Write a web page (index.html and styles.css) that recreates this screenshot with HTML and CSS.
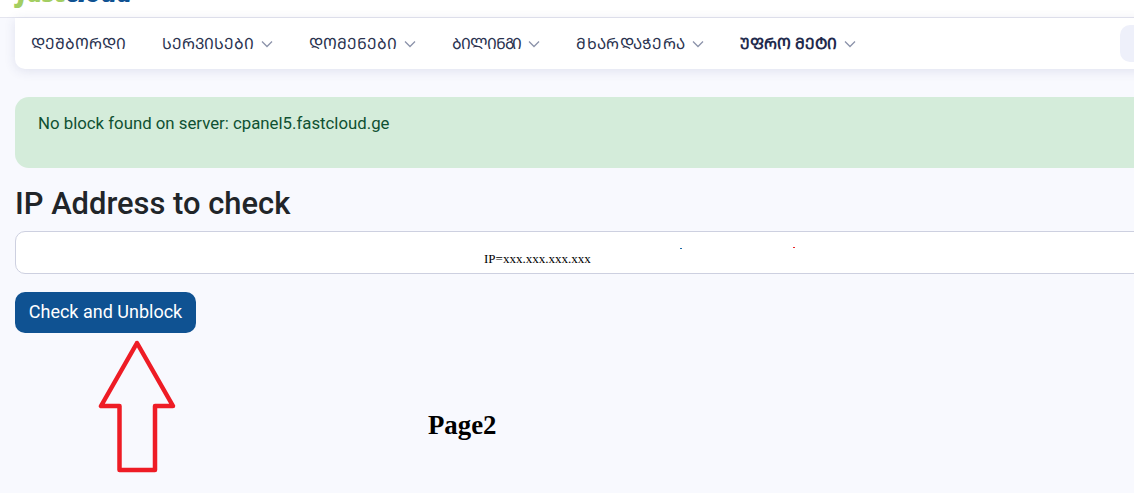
FILE: index.html
```html
<!DOCTYPE html>
<html lang="ka">
<head>
<meta charset="utf-8">
<title>Check and Unblock</title>
<link rel="stylesheet" href="styles.css">
</head>
<body>
<div class="page">
  <header class="topbar">
    <div class="logo"><span class="logo-fast">fast</span><span class="logo-cloud">cloud</span></div>
  </header>
  <main class="content">
    <nav class="nav">
      <a class="nav-item">ᲓᲔᲨᲑᲝᲠᲓᲘ</a>
      <a class="nav-item">ᲡᲔᲠᲕᲘᲡᲔᲑᲘ<svg class="chev" viewBox="0 0 12 8"><path d="M1 1.5l5 5 5-5"/></svg></a>
      <a class="nav-item">ᲓᲝᲛᲔᲜᲔᲑᲘ<svg class="chev" viewBox="0 0 12 8"><path d="M1 1.5l5 5 5-5"/></svg></a>
      <a class="nav-item nav-tight">ᲑᲘᲚᲘᲜᲒᲘ<svg class="chev" viewBox="0 0 12 8"><path d="M1 1.5l5 5 5-5"/></svg></a>
      <a class="nav-item nav-wide">ᲛᲮᲐᲠᲓᲐᲭᲔᲠᲐ<svg class="chev" viewBox="0 0 12 8"><path d="M1 1.5l5 5 5-5"/></svg></a>
      <a class="nav-item nav-more">ᲣᲤᲠᲝ ᲛᲔᲢᲘ<svg class="chev" viewBox="0 0 12 8"><path d="M1 1.5l5 5 5-5"/></svg></a>
      <div class="nav-search"></div>
    </nav>
    <div class="alert">No block found on server: cpanel5.fastcloud.ge</div>
    <h1 class="title">IP Address to check</h1>
    <div class="field"></div>
    <button class="btn" type="button">Check and Unblock</button>
  </main>
  <div class="ip-note">IP=xxx.xxx.xxx.xxx</div>
  <span class="speck speck-blue"></span>
  <span class="speck speck-red"></span>
  <svg class="arrow" viewBox="0 0 80 136" width="80" height="136">
    <path d="M39 4L3 67H21.5V131H57V67H75Z"/>
  </svg>
  <div class="page-label">Page2</div>
</div>
</body>
</html>
```
FILE: styles.css
```css
* { box-sizing: border-box; }
html, body { margin: 0; height: 100%; overflow: hidden; }
body { background: #f8f9fe; font-family: Roboto, "DejaVu Sans", sans-serif; }
.page { position: relative; width: 1134px; height: 493px; overflow: hidden; }
.topbar {
  height: 18px;
  background: #fff;
  border-bottom: 1px solid #e4e5ef;
  padding-left: 17px;
  overflow: hidden;
  display: flex;
  align-items: flex-end;
}
.logo {
  font: italic 800 27px/30px "Open Sans", sans-serif;
  margin-bottom: 10px;
  letter-spacing: -1.2px;
  white-space: nowrap;
}
.logo-fast { color: #a3ce62; }
.logo-cloud { color: #0f5292; }
.content { width: 1315px; padding-left: 15px; }
.nav {
  height: 51px;
  background: #fff;
  border-radius: 0 0 10px 10px;
  box-shadow: 0 2px 12px rgba(50, 60, 120, 0.12);
  display: flex;
  align-items: center;
  padding-left: 16px;
}
.nav-item {
  display: flex;
  align-items: center;
  font-family: "Noto Sans", "DejaVu Sans", sans-serif;
  font-size: 15.4px;
  color: #2a3350;
  margin-right: 36px;
  white-space: nowrap;
}
.nav-tight { letter-spacing: -1.1px; }
.nav-wide { letter-spacing: 0.3px; }
.nav-more { font-weight: 700; color: #1f2a4d; }
.chev { width: 12px; height: 8px; margin-left: 7px; fill: none; stroke: #8c93aa; stroke-width: 1.3; }
.nav-search {
  width: 195px;
  height: 37px;
  margin-left: auto;
  background: #eef0fa;
  border-radius: 10px;
}
.alert {
  height: 71px;
  margin-top: 28px;
  padding: 16px 23px;
  background: #d4ecda;
  border-radius: 14px;
  color: #0f5132;
  font-size: 16.8px;
  line-height: 21px;
}
.title {
  margin: 17px 0 0;
  font-size: 30.9px;
  line-height: 38px;
  font-weight: 500;
  color: #212529;
}
.field {
  height: 43px;
  margin-top: 8px;
  background: #fff;
  border: 1px solid #cdd0e0;
  border-radius: 10px;
}
.btn {
  display: block;
  height: 41px;
  width: 181px;
  margin-top: 18px;
  padding: 0 0 2px;
  border: 0;
  border-radius: 10px;
  background: #0f5292;
  color: #fff;
  font-family: Roboto, sans-serif;
  font-size: 18px;
}
.ip-note {
  position: absolute;
  left: 484px;
  top: 252px;
  font: 13px/14px "Liberation Serif", serif;
  color: #000;
}
.speck { position: absolute; height: 1px; width: 2px; }
.speck-blue { left: 680px; top: 248px; background: #1c6aa8; }
.speck-red { left: 793px; top: 247px; background: #e8262a; }
.arrow {
  position: absolute;
  left: 98px;
  top: 339px;
  fill: none;
  stroke: #ee1c25;
  stroke-width: 4.5;
  stroke-linejoin: round;
}
.page-label {
  position: absolute;
  left: 428px;
  top: 410px;
  font: 700 26.8px/30px "Liberation Serif", serif;
  color: #000;
}
```
